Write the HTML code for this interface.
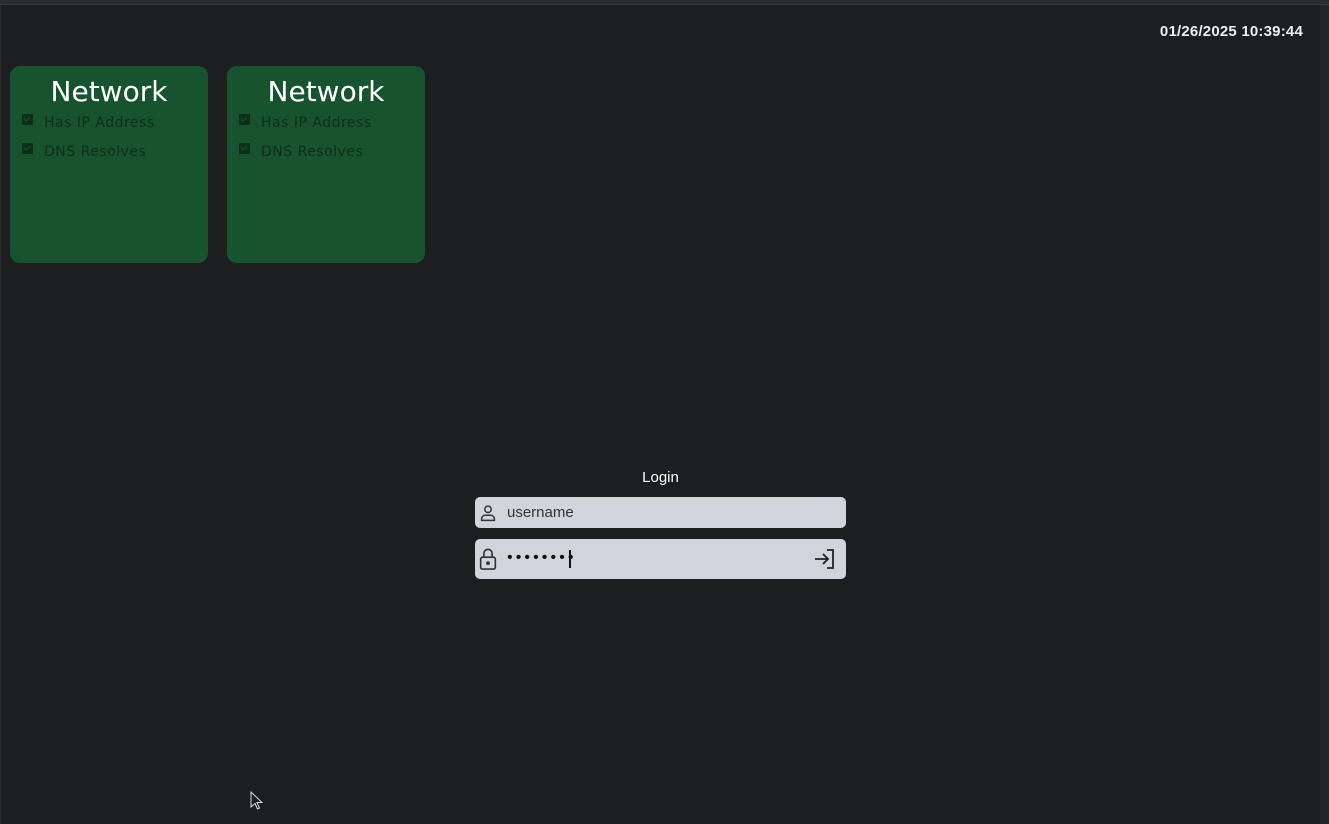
<!DOCTYPE html>
<html><head><meta charset="utf-8"><style>
html,body{margin:0;padding:0}
body{width:1329px;height:824px;background:#1d1e20;position:relative;overflow:hidden;font-family:"Liberation Sans",sans-serif}
.top{position:absolute;left:0;top:0;width:1329px;height:4px;background:#2a2b2d;border-bottom:1px solid #3a3b3d}
.right{position:absolute;left:1320px;top:5px;width:9px;height:819px;background:#242527}
.left{position:absolute;left:0;top:5px;width:1px;height:819px;background:#2a2b2d}
.time{position:absolute;right:26px;top:23px;color:#eee;font-size:15px;font-weight:bold;letter-spacing:0.2px}
.card{position:absolute;top:66px;width:198px;height:197px;background:#17532f;border-radius:10px}
.card h1{margin:0;position:absolute;top:9px;width:100%;text-align:center;color:#fff;font-family:"DejaVu Sans",sans-serif;font-weight:normal;font-size:28px}
.item{position:absolute;left:12px;color:#0f2d1b;font-family:"DejaVu Sans",sans-serif;font-size:14px;letter-spacing:0.5px}
.item b{display:inline-block;width:11px;height:11px;background:#0f2d1b;border-radius:1px;margin-right:11px;vertical-align:2px;position:relative}
.item b:after{content:"";position:absolute;left:2px;top:2px;width:5px;height:3px;border-left:1.5px solid #17532f;border-bottom:1.5px solid #17532f;transform:rotate(-45deg)}
.login{position:absolute;left:475px;width:371px;text-align:center;top:469px;color:#fff;font-size:15px}
.in{position:absolute;left:475px;width:371px;background:#d1d4db;border-radius:5px;color:#333}
</style></head><body>
<div class="top"></div><div class="left"></div><div class="right"></div>
<div class="time">01/26/2025 10:39:44</div>
<div class="card" style="left:10px"><h1>Network</h1><div class="item" style="top:48px"><b></b>Has IP Address</div><div class="item" style="top:77px"><b></b>DNS Resolves</div></div>
<div class="card" style="left:227px"><h1>Network</h1><div class="item" style="top:48px"><b></b>Has IP Address</div><div class="item" style="top:77px"><b></b>DNS Resolves</div></div>
<div class="login">Login</div>
<div class="in" style="top:497px;height:31px">
<svg style="position:absolute;left:2px;top:5px" width="22" height="22" viewBox="0 0 24 24" fill="none" stroke="#333" stroke-width="1.6"><circle cx="12" cy="8" r="3.5"/><path d="M5 20v-1.5a4 4 0 0 1 4-4h6a4 4 0 0 1 4 4V20z"/></svg>
<span style="position:absolute;left:32px;top:7px;font-size:15px">username</span></div>
<div class="in" style="top:539px;height:40px">
<svg style="position:absolute;left:2px;top:8px" width="22" height="24" viewBox="0 0 24 26" fill="none" stroke="#333" stroke-width="1.8"><rect x="4" y="11" width="16" height="13" rx="2"/><path d="M7.5 11V7a4.5 4.5 0 0 1 9 0v4"/><circle cx="12" cy="17.5" r="1.2" fill="#333"/></svg>
<span style="position:absolute;left:32px;top:10px;font-size:16px;letter-spacing:3.1px;color:#111">••••••••</span><span style="position:absolute;left:94px;top:11px;width:2px;height:18px;background:#111"></span>
<svg style="position:absolute;left:338px;top:9px" width="24" height="22" viewBox="0 0 24 22" fill="none" stroke="#222" stroke-width="1.8"><path d="M14 2h6v18h-6"/><path d="M2 11h13M10 6l5 5-5 5"/></svg>
</div>
<svg style="position:absolute;left:250px;top:791px" width="14" height="20" viewBox="0 0 14 20"><path d="M1 1v15l4-3.5 2.5 5.5 2-1-2.5-5.5h5z" fill="#1d1e20" stroke="#ddd" stroke-width="1"/></svg>
</body></html>
